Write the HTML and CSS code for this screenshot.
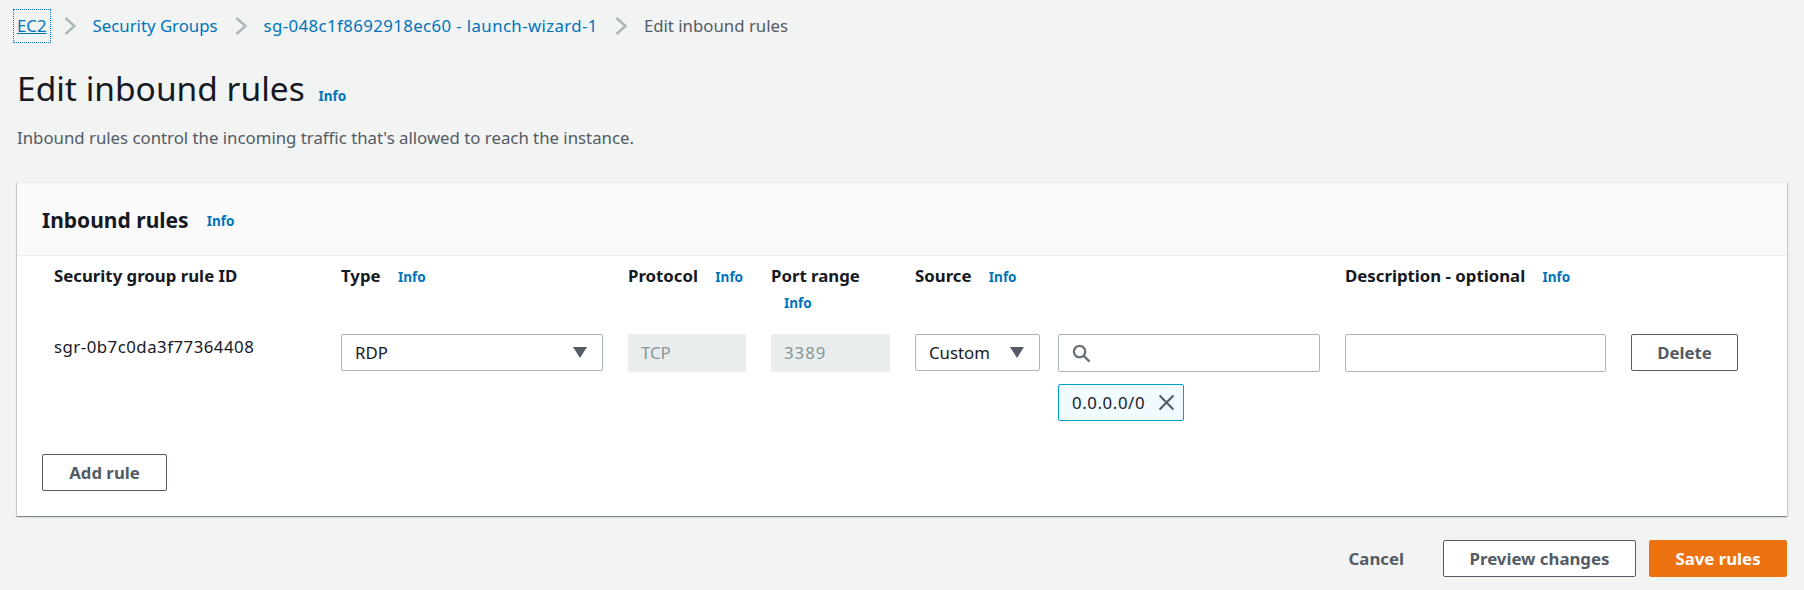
FILE: index.html
```html
<!DOCTYPE html>
<html>
<head>
  <title>Edit inbound rules</title>
  <link rel="stylesheet" href="styles.css">
</head>
<body>
  <nav class="crumbs">
    <a class="crumb-link crumb-focus" href="#">EC2</a>
    <svg class="chevron" viewBox="0 0 12 18"><path d="M1.5 1l9 8-9 8"/></svg>
    <a class="crumb-link" href="#">Security Groups</a>
    <svg class="chevron" viewBox="0 0 12 18"><path d="M1.5 1l9 8-9 8"/></svg>
    <a class="crumb-link crumb-id" href="#">sg-048c1f8692918ec60 - launch-wizard-1</a>
    <svg class="chevron" viewBox="0 0 12 18"><path d="M1.5 1l9 8-9 8"/></svg>
    <span class="crumb-current">Edit inbound rules</span>
  </nav>

  <h1 class="page-title">Edit inbound rules <a class="info info-title" href="#">Info</a></h1>
  <p class="page-desc">Inbound rules control the incoming traffic that's allowed to reach the instance.</p>

  <section class="card">
    <header class="card-head">
      <h2 class="card-title">Inbound rules</h2>
      <a class="info info-card" href="#">Info</a>
    </header>
    <div class="card-body">
      <div class="rules">
        <div class="col-label">Security group rule ID</div>
        <div class="col-label">Type <a class="info" href="#">Info</a></div>
        <div class="col-label">Protocol <a class="info" href="#">Info</a></div>
        <div class="col-label">Port range <a class="info" href="#">Info</a></div>
        <div class="col-label">Source <a class="info" href="#">Info</a></div>
        <div></div>
        <div class="col-label">Description - optional <a class="info" href="#">Info</a></div>
        <div></div>

        <div class="rule-id">sgr-0b7c0da3f77364408</div>
        <div class="select">RDP <span class="caret"></span></div>
        <div class="field-off">TCP</div>
        <div class="field-off digits">3389</div>
        <div class="select select-source">Custom <span class="caret"></span></div>
        <div class="source-cell">
          <div class="field">
            <svg class="search-icon" viewBox="0 0 20 20"><circle cx="8" cy="8" r="6"/><path d="M12.5 12.5l6 6"/></svg>
          </div>
          <div class="chip"><span class="chip-text">0.0.0.0/0</span>
            <svg class="chip-x" viewBox="0 0 16 16"><path d="M1.5 1.5l13 13M14.5 1.5l-13 13"/></svg>
          </div>
        </div>
        <div class="field"></div>
        <button class="btn btn-delete">Delete</button>
      </div>
      <button class="btn btn-add">Add rule</button>
    </div>
  </section>

  <footer class="actions">
    <a class="cancel" href="#">Cancel</a>
    <button class="btn btn-preview">Preview changes</button>
    <button class="btn btn-save">Save rules</button>
  </footer>
</body>
</html>
```

FILE: styles.css
```css
* {
  box-sizing: border-box;
}
body {
  margin: 0;
  padding: 0 17px;
  height: 590px;
  overflow: hidden;
  background: #f2f3f3;
  color: #16191f;
  font-family: "Noto Sans", sans-serif;
  font-size: 16.8px;
  line-height: 26px;
}
a {
  color: #0073bb;
  text-decoration: none;
}

/* breadcrumbs */
.crumbs {
  display: flex;
  align-items: center;
  height: 32px;
  margin-top: 10px;
}
.crumb-focus {
  text-decoration: underline;
  outline: 1px dotted #0073bb;
  outline-offset: 3px;
}
.crumb-id {
  letter-spacing: .4px;
}
.chevron {
  width: 12px;
  height: 18px;
  margin: 0 17px;
  fill: none;
  stroke: #aab7b8;
  stroke-width: 2.4;
}
.crumb-current {
  color: #545b64;
}

/* title */
.page-title {
  margin: 26px 0 0;
  font-size: 33.5px;
  line-height: 40px;
  font-weight: 400;
}
.info {
  margin-left: 13px;
  font-size: 13.5px;
  font-weight: 700;
}
.info-title {
  margin-left: 5px;
}
.page-desc {
  margin: 9px 0 0;
  color: #545b64;
}

/* card */
.card {
  margin-top: 31px;
  height: 334px;
  background: #fff;
  border-top: 1px solid #eaeded;
  box-shadow: 0 1px 1px 0 rgba(0, 28, 36, .3), 1px 1px 1px 0 rgba(0, 28, 36, .15), -1px 1px 1px 0 rgba(0, 28, 36, .15);
}
.card-head {
  display: flex;
  align-items: center;
  height: 73px;
  padding: 2px 0 0 25px;
  background: #fafafa;
  border-bottom: 1px solid #eaeded;
}
.card-title {
  margin: 0;
  font-size: 21px;
  font-weight: 700;
}
.info-card {
  margin: 2px 0 0 18px;
}
.card-body {
  padding: 7px 25px 0;
}
.rules {
  display: grid;
  grid-template-columns: 262px 262px 118px 119px 118px 262px 261px 107px;
  column-gap: 25px;
  padding-left: 12px;
}
.col-label {
  font-weight: 700;
  height: 71px;
}
.rule-id {
  letter-spacing: .5px;
}
.digits {
  letter-spacing: 1px;
}

/* form controls */
.select, .field, .field-off, .btn {
  height: 38px;
  border-radius: 2px;
  font-family: inherit;
  font-size: 16.8px;
}
.select {
  display: flex;
  align-items: center;
  justify-content: space-between;
  height: 37px;
  padding: 0 15px 0 13px;
  background: #fff;
  border: 1px solid #aab7b8;
}
.select-source {
  width: 125px;
}
.caret {
  width: 0;
  height: 0;
  border-left: 7px solid transparent;
  border-right: 7px solid transparent;
  border-top: 11px solid #545b64;
}
.field-off {
  display: flex;
  align-items: center;
  padding: 0 13px;
  background: #eaeded;
  color: #879596;
}
.field {
  display: flex;
  align-items: center;
  padding-left: 13px;
  background: #fff;
  border: 1px solid #aab7b8;
}
.search-icon {
  width: 19px;
  height: 19px;
  fill: none;
  stroke: #687078;
  stroke-width: 2.4;
}
.chip {
  display: inline-flex;
  align-items: center;
  gap: 13px;
  height: 37px;
  margin-top: 12px;
  padding: 0 8px 0 13px;
  background: #f1faff;
  border: 1px solid #00a1c9;
  border-radius: 2px;
}
.chip-text {
  letter-spacing: .6px;
}
.chip-x {
  width: 17px;
  height: 17px;
  fill: none;
  stroke: #545b64;
  stroke-width: 2;
}

/* buttons */
.btn {
  height: 37px;
  padding: 0;
  background: #fff;
  border: 1px solid #545b64;
  color: #545b64;
  font-weight: 700;
}
.btn-add {
  display: block;
  width: 125px;
  margin-top: 33px;
}
.actions {
  display: flex;
  align-items: center;
  justify-content: flex-end;
  margin-top: 24px;
}
.cancel {
  margin-right: 39px;
  color: #545b64;
  font-weight: 700;
}
.btn-preview {
  width: 193px;
  margin-right: 13px;
}
.btn-save {
  width: 138px;
  background: #ec7211;
  border-color: #ec7211;
  color: #fff;
}
```
